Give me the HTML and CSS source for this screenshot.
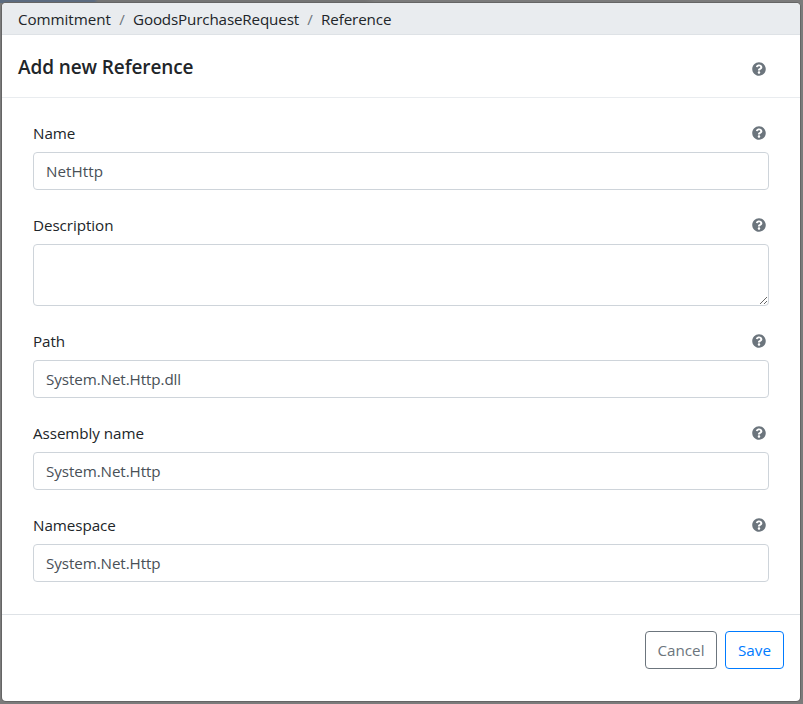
FILE: index.html
```html
<!DOCTYPE html>
<html lang="en">
<head>
<meta charset="utf-8">
<title>Add new Reference</title>
<link rel="stylesheet" href="styles.css">
</head>
<body>
<svg class="sprite" aria-hidden="true"><symbol id="help" viewBox="0 0 512 512"><path d="M504 256c0 136.997-111.043 248-248 248S8 392.997 8 256C8 119.083 119.043 8 256 8s248 111.083 248 248zM262.655 90c-54.497 0-89.255 22.957-116.549 63.758-3.536 5.286-2.353 12.415 2.715 16.258l34.699 26.31c5.205 3.947 12.621 3.008 16.665-2.122 17.864-22.658 30.113-35.797 57.303-35.797 20.429 0 45.698 13.148 45.698 32.958 0 14.976-12.363 22.667-32.534 33.976C247.128 238.528 216 254.941 216 296v4c0 6.627 5.373 12 12 12h56c6.627 0 12-5.373 12-12v-1.333c0-28.462 83.186-29.647 83.186-106.667 0-58.002-60.165-102-116.531-102zM256 338c-25.365 0-46 20.635-46 46 0 25.364 20.635 46 46 46s46-20.636 46-46c0-25.365-20.635-46-46-46z"/></symbol></svg>
<main class="modal">
  <nav class="breadcrumb"><span class="crumb commitment">Commitment</span><span class="divider">/</span><span class="crumb goods">GoodsPurchaseRequest</span><span class="divider">/</span><span class="crumb reference">Reference</span></nav>
  <header class="header"><h1>Add new Reference</h1><svg class="help"><use href="#help"/></svg></header>
  <form class="body">
    <div class="field"><div class="label"><label for="name">Name</label><svg class="help"><use href="#help"/></svg></div><input id="name" class="short" value="NetHttp"></div>
    <div class="field"><div class="label"><label for="description">Description</label><svg class="help"><use href="#help"/></svg></div><textarea id="description"></textarea></div>
    <div class="field"><div class="label"><label for="path">Path</label><svg class="help"><use href="#help"/></svg></div><input id="path" value="System.Net.Http.dll"></div>
    <div class="field"><div class="label"><label for="assembly">Assembly name</label><svg class="help"><use href="#help"/></svg></div><input id="assembly" value="System.Net.Http"></div>
    <div class="field"><div class="label"><label for="namespace">Namespace</label><svg class="help"><use href="#help"/></svg></div><input id="namespace" value="System.Net.Http"></div>
  </form>
  <footer class="footer"><button class="cancel">Cancel</button><button class="save">Save</button></footer>
</main>
</body>
</html>
```
FILE: styles.css
```css
* { box-sizing: border-box; }
body {
  margin: 0;
  height: 704px;
  padding: 3px 3px 3px 2px;
  overflow: hidden;
  background: linear-gradient(90deg, #5b6b80 0 94px, #747474 98px 365px, #7b7b7b 375px) 0 0 / 100% 3px no-repeat #7b7b7b;
  color: #212529;
  font: 15.2px/24px "Open Sans", "Noto Sans", sans-serif;
  letter-spacing: -0.06px;
}
.sprite { display: none; }
.modal {
  height: 698px;
  background: #fff;
  border-radius: 4px;
  overflow: hidden;
  box-shadow: 0 0 0 1px #656565;
}
.breadcrumb {
  display: flex;
  height: 32px;
  padding: 4px 16px;
  background: #e9ecef;
  border-bottom: 1px solid #dee2e6;
}
.divider { width: 22px; text-align: center; color: #6c757d; }
.commitment { width: 93px; }
.goods { width: 166px; letter-spacing: -0.15px; }
.reference { letter-spacing: -0.12px; }
.header {
  display: flex;
  justify-content: space-between;
  align-items: center;
  height: 63px;
  padding: 0 34px 0 16px;
  border-bottom: 1px solid #e9ecef;
}
h1 { margin: 0; padding-top: 2px; font-size: 19px; font-weight: 600; line-height: 30px; letter-spacing: -0.1px; }
.help { width: 14px; height: 14px; fill: #6c757d; }
.header .help { margin-top: 6px; }
.body {
  display: flex;
  flex-direction: column;
  gap: 22px;
  height: 516px;
  padding: 22px 31px 0;
}
.label {
  display: flex;
  justify-content: space-between;
  align-items: center;
  height: 24px;
  margin-bottom: 8px;
  padding-right: 3px;
}
.label label { padding-top: 2px; }
.label .help { margin-top: 2px; }
input, textarea {
  display: block;
  width: 100%;
  height: 38px;
  padding: 6px 12px;
  border: 1px solid #ced4da;
  border-radius: 4px;
  background: #fff;
  color: #495057;
  font: inherit;
  letter-spacing: -0.09px;
}
.short { letter-spacing: 0.06px; }
textarea { height: 62px; resize: vertical; }
.footer {
  display: flex;
  justify-content: flex-end;
  gap: 8px;
  padding: 16px;
  border-top: 1px solid #dee2e6;
}
button {
  height: 38px;
  padding: 0;
  border: 1px solid;
  border-radius: 4px;
  background: #fff;
  font: inherit;
}
.cancel { width: 72px; color: #6c757d; }
.save { width: 59px; color: #007bff; }
```
